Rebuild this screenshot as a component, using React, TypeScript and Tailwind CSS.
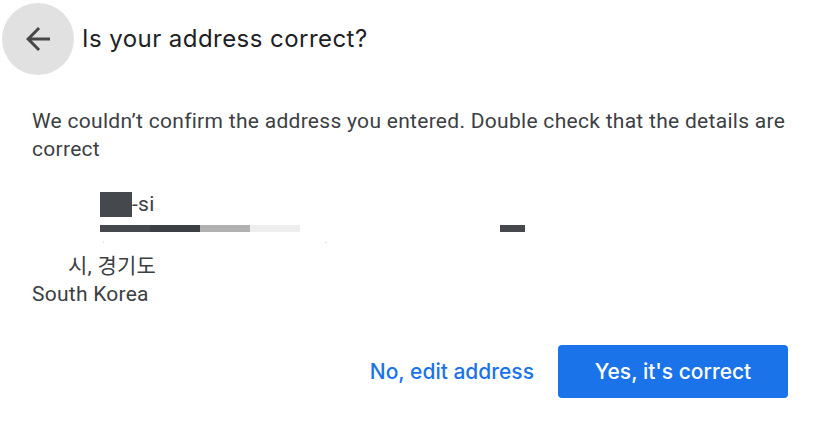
import React from "react";

export default function App() {
  return (
    <div className="relative h-[432px] w-[822px] overflow-hidden bg-white">
      <div className="flex items-center pl-[2px] pt-[3px]">
        <div className="flex h-[72px] w-[72px] items-center justify-center rounded-full bg-[#e1e1e1]">
          <svg width="36" height="36" viewBox="0 0 24 24" fill="#474747">
            <path d="M20 11H7.83l5.59-5.59L12 4l-8 8 8 8 1.41-1.41L7.83 13H20v-2z" />
          </svg>
        </div>
        <h1 className="ml-[8px] font-['Inter',sans-serif] text-[24px] leading-[30px] tracking-[0.45px] text-[#202124]">
          Is your address correct?
        </h1>
      </div>

      <p className="mt-[32px] pl-[32px] pr-[30px] font-['Roboto',sans-serif] text-[21px] leading-[28px] tracking-[0.29px] text-[#3c4043]">
        We couldn’t confirm the address you entered. Double check that the details are correct
      </p>

      <div className="mt-[27px] font-['Roboto',sans-serif] text-[21px] leading-[28px] tracking-[0.25px] text-[#3c4043]">
        <div className="flex items-center pl-[100px]">
          <span className="inline-block h-[25px] w-[32px] bg-[#45484c]" />
          <span>-si</span>
        </div>
        <div className="mt-[7px] flex h-[7px] pl-[100px]">
          <span className="w-[50px] bg-[#45484c]" />
          <span className="w-[50px] bg-[#3c3f43]" />
          <span className="w-[50px] bg-[#b1b1b1]" />
          <span className="w-[50px] bg-[#eeeeee]" />
          <span className="ml-[200px] w-[25px] bg-[#45484c]" />
        </div>
        <div className="flex h-[20px] items-center pl-[103px]">
          <span className="h-[2px] w-[1px] bg-[#e4e4e4]" />
          <span className="ml-[221px] h-[1px] w-[2px] bg-[#e4e4e4]" />
        </div>
        <div className="pl-[68px] font-['Roboto','Noto_Sans_CJK_KR',sans-serif]">시, 경기도</div>
        <div className="pl-[32px]">South Korea</div>
      </div>

      <div className="mt-[37px] flex items-center justify-end pr-[34px] font-['Inter',sans-serif] text-[21px] font-medium">
        <button className="mr-[24px] text-[#1a73e8]">No, edit address</button>
        <button className="flex h-[53px] w-[230px] items-center justify-center rounded-[4px] bg-[#1a73e8] text-white">
          Yes, it's correct
        </button>
      </div>
    </div>
  );
}
